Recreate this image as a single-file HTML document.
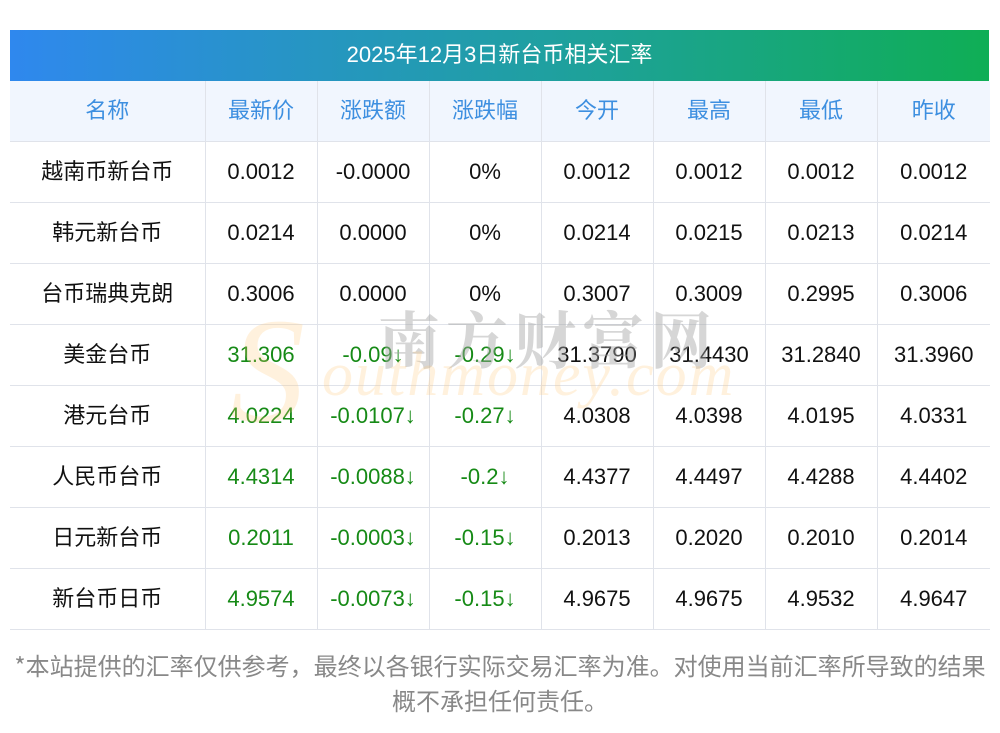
<!DOCTYPE html><html><head><meta charset="utf-8"><style>
body{margin:0;background:#fff;width:1000px;height:733px;position:relative;overflow:hidden;font-family:"Liberation Sans","Noto Sans CJK SC",sans-serif}
.title{position:absolute;left:10px;top:30px;width:979px;height:51px;background:linear-gradient(90deg,#2f88ee,#1fa0a0 55%,#0fae55);color:#fff;font-size:22px;text-align:center;line-height:49px}
table{position:absolute;left:10px;top:81px;border-collapse:collapse;width:980px;table-layout:fixed}
td{border:1px solid #e0e3ea;height:60px;text-align:center;font-size:22px;color:#111;padding:0;line-height:24px}
td span{position:relative;top:-2px}
tr:first-child td{background:#f1f6fe;color:#3d8fe0;border-top:none;font-family:"Noto Sans CJK SC",sans-serif}
td:first-child{border-left:none;font-family:"Noto Sans CJK SC",sans-serif}td:last-child{border-right:none}
.g{color:#168a16}
.foot{position:absolute;left:0;width:1000px;top:647px;text-align:center;color:#888;font-size:24px;line-height:35px;font-family:"Noto Sans CJK SC",sans-serif}
.wm1{position:absolute;left:378px;top:292px;font-size:62px;font-weight:bold;color:rgba(165,165,165,.45);letter-spacing:6px;font-family:"Noto Serif CJK SC",serif}
.wm2{position:absolute;left:322px;top:340px;font-size:62px;color:rgba(255,200,120,.25);font-style:italic;font-family:"Liberation Serif",serif;letter-spacing:2px}
.wm3{position:absolute;left:230px;top:285px;font-size:150px;color:rgba(255,200,120,.25);font-style:italic;font-family:"Liberation Serif",serif}
</style></head><body>
<div class="title">2025年12月3日新台币相关汇率</div>
<table>
<colgroup><col style="width:195px"><col style="width:112px"><col style="width:112px"><col style="width:112px"><col style="width:112px"><col style="width:112px"><col style="width:112px"><col style="width:113px"></colgroup>
<tr><td><span>名称</span></td><td><span>最新价</span></td><td><span>涨跌额</span></td><td><span>涨跌幅</span></td><td><span>今开</span></td><td><span>最高</span></td><td><span>最低</span></td><td><span>昨收</span></td></tr>
<tr><td><span>越南币新台币</span></td><td>0.0012</td><td>-0.0000</td><td>0%</td><td>0.0012</td><td>0.0012</td><td>0.0012</td><td>0.0012</td></tr>
<tr><td><span>韩元新台币</span></td><td>0.0214</td><td>0.0000</td><td>0%</td><td>0.0214</td><td>0.0215</td><td>0.0213</td><td>0.0214</td></tr>
<tr><td><span>台币瑞典克朗</span></td><td>0.3006</td><td>0.0000</td><td>0%</td><td>0.3007</td><td>0.3009</td><td>0.2995</td><td>0.3006</td></tr>
<tr><td><span>美金台币</span></td><td class="g">31.306</td><td class="g">-0.09↓</td><td class="g">-0.29↓</td><td>31.3790</td><td>31.4430</td><td>31.2840</td><td>31.3960</td></tr>
<tr><td><span>港元台币</span></td><td class="g">4.0224</td><td class="g">-0.0107↓</td><td class="g">-0.27↓</td><td>4.0308</td><td>4.0398</td><td>4.0195</td><td>4.0331</td></tr>
<tr><td><span>人民币台币</span></td><td class="g">4.4314</td><td class="g">-0.0088↓</td><td class="g">-0.2↓</td><td>4.4377</td><td>4.4497</td><td>4.4288</td><td>4.4402</td></tr>
<tr><td><span>日元新台币</span></td><td class="g">0.2011</td><td class="g">-0.0003↓</td><td class="g">-0.15↓</td><td>0.2013</td><td>0.2020</td><td>0.2010</td><td>0.2014</td></tr>
<tr><td><span>新台币日币</span></td><td class="g">4.9574</td><td class="g">-0.0073↓</td><td class="g">-0.15↓</td><td>4.9675</td><td>4.9675</td><td>4.9532</td><td>4.9647</td></tr>
</table>
<div class="wm3">S</div>
<div class="wm1">南方财富网</div>
<div class="wm2">outhmoney.com</div>
<div class="foot">*本站提供的汇率仅供参考，最终以各银行实际交易汇率为准。对使用当前汇率所导致的结果<br>概不承担任何责任。</div>
</body></html>
